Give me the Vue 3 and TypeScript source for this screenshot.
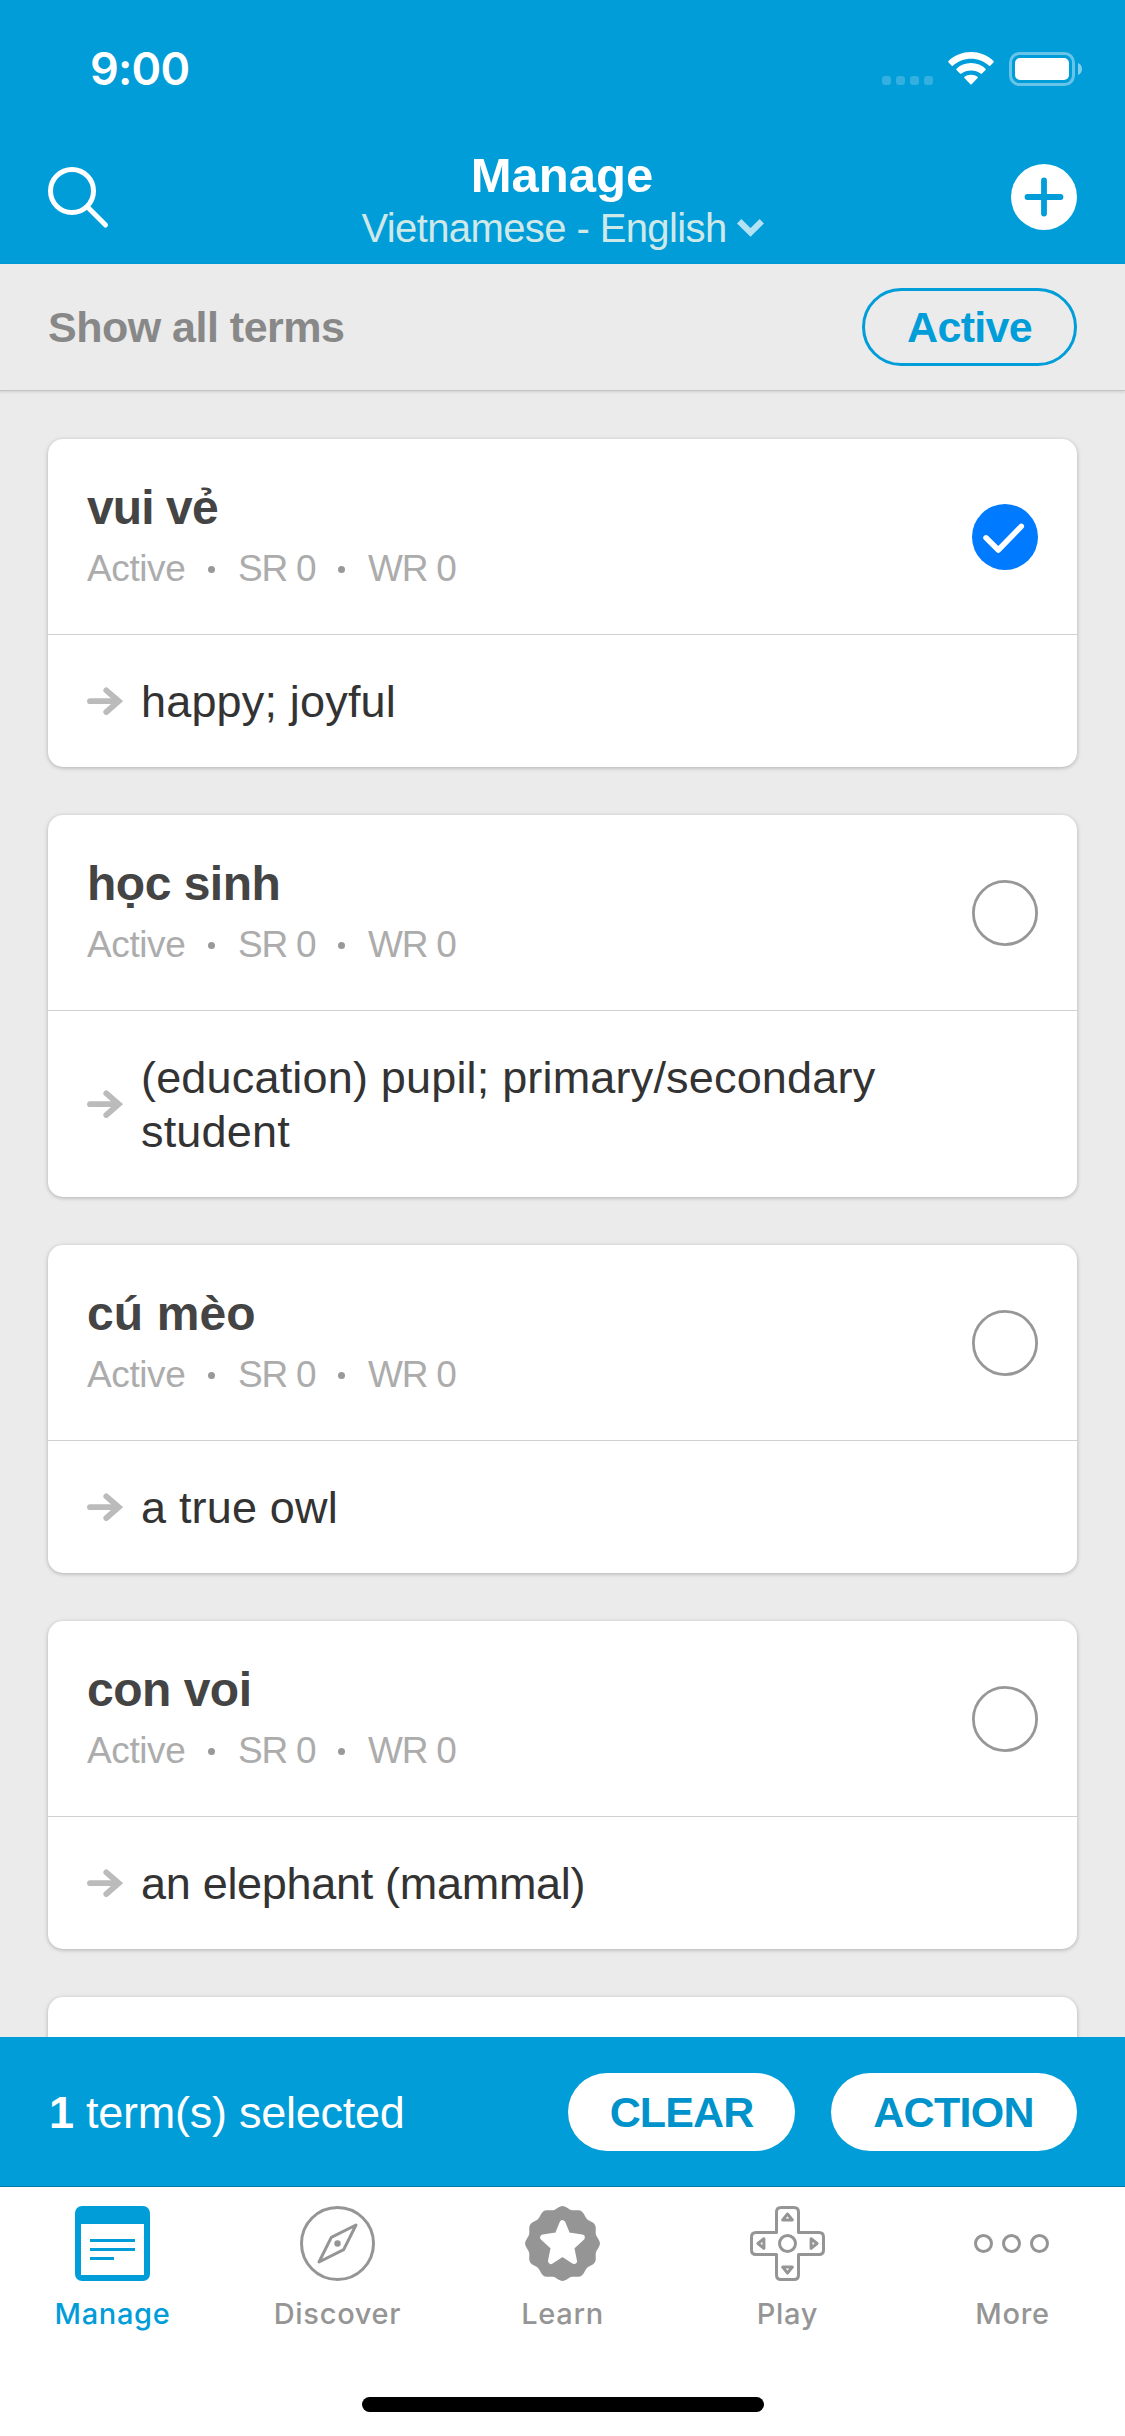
<script setup lang="ts">
interface Term {
  word: string
  meaning: string
  selected: boolean
  wordTracking?: number
  meaningTracking?: number
}

const terms: Term[] = [
  { word: 'vui vẻ', meaning: 'happy; joyful', selected: true, wordTracking: -0.9 },
  { word: 'học sinh', meaning: '(education) pupil; primary/secondary student', selected: false },
  { word: 'cú mèo', meaning: 'a true owl', selected: false, wordTracking: 0.1 },
  { word: 'con voi', meaning: 'an elephant (mammal)', selected: false, meaningTracking: -0.3 },
  { word: '', meaning: '', selected: false },
]

// Twelve-lobed badge outline, sampled around the circle
const badge: string =
  'M' +
  Array.from({ length: 180 }, (_, i) => {
    const a = (i / 180) * Math.PI * 2
    const r = 36 + 1.4 * Math.cos(12 * a)
    return `${(37.5 + r * Math.sin(a)).toFixed(2)} ${(37.5 - r * Math.cos(a)).toFixed(2)}`
  }).join('L') +
  'Z'
</script>

<template>
  <div class="screen">
    <header class="header">
      <div class="status">
        <span class="time">9:00</span>
        <div class="status-icons">
          <svg width="51" height="9" viewBox="0 0 51 9" class="cell">
            <rect v-for="i in 4" :key="i" :x="(i - 1) * 14" y="0" width="9" height="9" rx="3" fill="#fff" fill-opacity=".2" />
          </svg>
          <svg width="46" height="33" viewBox="0 0 46 33" class="wifi">
            <path d="M23 0C32 0 40 3.4 45.5 9.1Q46 9.8 45.5 10.4L42.2 13.7Q41.5 14.2 40.8 13.6C36 9.2 29.900 6.700 23 6.700S10 9.200 5.200 13.600Q4.500 14.200 3.800 13.700L.5 10.400Q0 9.800 .5 9.100C6 3.400 14 0 23 0Z" fill="#fff" />
            <path d="M23 11C28.800 11 33.900 13.100 37.500 16.800Q38 17.400 37.500 18L34 21.500Q33.300 22.100 32.600 21.500C30 19.500 26.700 18.500 23 18.500S16 19.500 13.400 21.500Q12.700 22.100 12 21.500L8.500 18Q8 17.400 8.500 16.800C12.100 13.100 17.200 11 23 11Z" fill="#fff" />
            <path d="M23 22.800C25.600 22.800 28 23.500 29.500 24.800Q30.100 25.400 29.600 26L23.600 32.300Q23 32.800 22.400 32.300L16.400 26Q15.900 25.400 16.500 24.800C18 23.500 20.400 22.800 23 22.800Z" fill="#fff" />
          </svg>
          <svg width="73" height="34" viewBox="0 0 73 34" class="battery">
            <rect x="1.500" y="1.500" width="63" height="31" rx="9" fill="none" stroke="#fff" stroke-opacity=".4" stroke-width="3" />
            <rect x="6" y="6" width="54" height="22" rx="5" fill="#fff" />
            <path d="M69 11C71.500 12 73 14.300 73 17S71.500 22 69 23Z" fill="#fff" fill-opacity=".5" />
          </svg>
        </div>
      </div>
      <div class="nav">
        <svg class="nav-search" width="66" height="66" viewBox="0 0 66 66" fill="none" stroke="#fff" stroke-width="5" stroke-linecap="round">
          <circle cx="24" cy="27" r="21.500" />
          <path d="M39.500 43L57.500 61" />
        </svg>
        <div class="nav-title">
          <h1>Manage</h1>
          <div class="pair">
            <span>Vietnamese - English</span>
            <svg width="27" height="18" viewBox="0 0 27 18" fill="none">
              <path d="M2.200 2.200L13.500 13.400L24.800 2.200" stroke="#fff" stroke-opacity=".7" stroke-width="6.200" />
            </svg>
          </div>
        </div>
        <svg width="66" height="66" viewBox="0 0 66 66">
          <circle cx="33" cy="33" r="33" fill="#fff" />
          <path d="M33 16.500V49.500M16.500 33H49.500" stroke="#009dd9" stroke-width="5.800" stroke-linecap="round" />
        </svg>
      </div>
    </header>

    <div class="filter">
      <span class="filter-label">Show all terms</span>
      <button class="filter-pill">Active</button>
    </div>

    <main class="list">
      <article v-for="(term, i) in terms" :key="i" class="card">
        <template v-if="term.word">
          <div class="card-head">
            <div>
              <h2 :style="{ letterSpacing: `${term.wordTracking ?? -0.5}px` }">{{ term.word }}</h2>
              <div class="meta">
                <span class="m-active">Active</span><i class="dot"></i><span class="m-sr">SR 0</span><i class="dot"></i><span class="m-wr">WR 0</span>
              </div>
            </div>
            <svg class="check" width="66" height="66" viewBox="0 0 66 66" fill="none">
              <template v-if="term.selected">
                <circle cx="33" cy="33" r="33" fill="#007aff" />
                <path d="M14 33.800L26.300 46L49.300 22.300" stroke="#fff" stroke-width="5.500" stroke-linecap="round" stroke-linejoin="round" />
              </template>
              <circle v-else cx="33" cy="33" r="31.600" stroke="#979797" stroke-width="2.800" />
            </svg>
          </div>
          <div class="card-body">
            <svg width="36" height="28" viewBox="0 0 36 28" fill="none" stroke="#bbb" stroke-width="5.800" stroke-linecap="round">
              <path d="M3 14.200H30" />
              <path d="M19.300 3.400L31.700 14.200L19.300 25" stroke-linejoin="miter" />
            </svg>
            <p :style="{ letterSpacing: `${term.meaningTracking ?? 0.18}px` }">{{ term.meaning }}</p>
          </div>
        </template>
      </article>
    </main>

    <div class="selection">
      <span class="count"><b>1</b> term(s) selected</span>
      <button class="pill clear">CLEAR</button>
      <button class="pill action">ACTION</button>
    </div>

    <nav class="tabs">
      <a class="tab current">
        <svg width="75" height="75" viewBox="0 0 75 75">
          <rect width="75" height="75" rx="7" fill="#009dd9" />
          <path d="M6 18H69V69H6Z" fill="#fff" />
          <path d="M15 34.500H60M15 43.500H60M15 52.500H39" stroke="#009dd9" stroke-width="3" />
        </svg>
        <span>Manage</span>
      </a>
      <a class="tab">
        <svg width="75" height="75" viewBox="0 0 75 75" fill="none" stroke="#959595" stroke-width="3">
          <circle cx="37.500" cy="37.500" r="36" />
          <path d="M56 19L31.300 31.300L19 56L43.700 43.700Z" stroke-linejoin="round" />
          <circle cx="37.500" cy="37.500" r="3.200" fill="#959595" stroke="none" />
        </svg>
        <span>Discover</span>
      </a>
      <a class="tab">
        <svg width="75" height="75" viewBox="0 0 75 75">
          <path :d="badge" fill="#959595" />
          <path d="M37.500 17.200L42.500 29.300L56.800 31.500L46.200 41.200L49 55L37.500 47.600L26 55L28.800 41.200L18.200 31.500L32.500 29.300Z" fill="#fff" stroke="#fff" stroke-width="6" stroke-linejoin="round" />
        </svg>
        <span>Learn</span>
      </a>
      <a class="tab">
        <svg width="75" height="75" viewBox="0 0 75 75" fill="none" stroke="#959595" stroke-width="3" stroke-linejoin="round">
          <path d="M31 1.500H44Q48.500 1.500 48.500 6V26.500H69Q73.500 26.500 73.500 31V44Q73.500 48.500 69 48.500H48.500V69Q48.500 73.500 44 73.500H31Q26.500 73.500 26.500 69V48.500H6Q1.500 48.500 1.500 44V31Q1.500 26.500 6 26.500H26.500V6Q26.500 1.500 31 1.500Z" />
          <circle cx="37.500" cy="37.500" r="8" />
          <path d="M37.500 8L42.300 13.900H32.700ZM37.500 67L42.300 61.100H32.700ZM8 37.500L13.900 42.300V32.700ZM67 37.500L61.100 42.300V32.700Z" />
        </svg>
        <span>Play</span>
      </a>
      <a class="tab">
        <svg class="more" width="75" height="75" viewBox="0 0 75 75" fill="none" stroke="#959595" stroke-width="3">
          <circle cx="8.500" cy="37.500" r="8" />
          <circle cx="36.500" cy="37.500" r="8" />
          <circle cx="64.500" cy="37.500" r="8" />
        </svg>
        <span>More</span>
      </a>
    </nav>
    <div class="home"><i></i></div>
  </div>
</template>

<style>
body {
  margin: 0;
  background: #fff;
}
</style>

<style scoped>
.screen {
  width: 1125px;
  height: 2436px;
  display: flex;
  flex-direction: column;
  overflow: hidden;
  background: #fff;
  font-family: "Liberation Sans", Arial, sans-serif;
}
svg {
  display: block;
  flex: none;
}
h1,
h2,
p {
  margin: 0;
}
button {
  font: inherit;
  border: 0;
  padding: 0;
  box-sizing: border-box;
}

.header {
  flex: none;
  height: 264px;
  background: #009dd9;
  color: #fff;
}
.status {
  height: 132px;
  box-sizing: border-box;
  display: flex;
  justify-content: space-between;
  padding: 41px 43px 0 90px;
}
.time {
  font: 600 45px/56px Inter, sans-serif;
  letter-spacing: -0.8px;
}
.status-icons {
  display: flex;
  align-items: flex-start;
  padding-top: 11px;
}
.cell {
  margin-top: 24px;
}
.wifi {
  margin-left: 15px;
}
.battery {
  margin-left: 15px;
}
.nav {
  height: 132px;
  box-sizing: border-box;
  display: flex;
  justify-content: space-between;
  align-items: flex-start;
  padding: 0 48px;
}
.nav > svg {
  margin-top: 32px;
}
.nav-title {
  padding-top: 13px;
  display: flex;
  flex-direction: column;
  align-items: center;
}
h1 {
  font-size: 49px;
  line-height: 60px;
  font-weight: 700;
  margin-right: 1px;
}
.pair {
  display: flex;
  align-items: center;
  gap: 10px;
  font-size: 40px;
  line-height: 46px;
  letter-spacing: -0.6px;
  color: #cfe8e8;
}

.filter {
  flex: none;
  height: 127px;
  box-sizing: border-box;
  display: flex;
  align-items: center;
  justify-content: space-between;
  padding: 0 48px;
  background: #ebebeb;
  border-bottom: 1px solid #c4c4c4;
  box-shadow: 0 1px 3px rgba(0, 0, 0, 0.12);
  position: relative;
}
.filter-label {
  font-size: 43px;
  font-weight: 700;
  letter-spacing: -0.5px;
  color: #888;
}
.filter-pill {
  width: 215px;
  height: 78px;
  border: 3px solid #009dd9;
  border-radius: 39px;
  background: none;
  color: #009dd9;
  font-size: 43px;
  font-weight: 700;
  letter-spacing: -0.7px;
}

.list {
  flex: 1;
  min-height: 0;
  overflow: hidden;
  box-sizing: border-box;
  padding: 48px;
  background: #ebebeb;
  display: flex;
  flex-direction: column;
  gap: 48px;
}
.card {
  flex: none;
  min-height: 328px;
  border-radius: 15px;
  background: #fff;
  box-shadow: 0 1px 4px rgba(0, 0, 0, 0.26);
}
.card-head {
  height: 196px;
  box-sizing: border-box;
  display: flex;
  align-items: flex-start;
  justify-content: space-between;
  padding: 39px 39px 0;
  border-bottom: 1px solid #d0d0d0;
}
.check {
  margin-top: 26px;
}
h2 {
  font-size: 48px;
  line-height: 60px;
  font-weight: 700;
  color: #444;
}
.meta {
  display: flex;
  align-items: center;
  font-size: 37px;
  line-height: 44px;
  margin-top: 9px;
  letter-spacing: -1.2px;
  white-space: nowrap;
  color: #acacac;
}
.m-active {
  width: 98px;
  letter-spacing: -0.4px;
}
.m-sr {
  width: 77px;
}
.dot {
  flex: none;
  width: 7px;
  height: 7px;
  margin: 0 23px;
  border-radius: 50%;
  background: #999;
}
.card-body {
  display: flex;
  align-items: center;
  gap: 18px;
  padding: 39px;
}
.card-body p {
  width: 860px;
  margin: 1px 0 -1px;
  font-size: 45px;
  line-height: 54px;
  color: #333;
}

.selection {
  flex: none;
  height: 150px;
  box-sizing: border-box;
  display: flex;
  align-items: center;
  padding: 1px 48px 0;
  background: #009dd9;
  border-bottom: 1px solid #0079a8;
  position: relative;
}
.count {
  flex: 1;
  padding: 2px 0 0 1px;
  font-size: 45px;
  letter-spacing: -0.25px;
  color: #fff;
}
.pill {
  height: 78px;
  border-radius: 39px;
  background: #fff;
  color: #0092ca;
  font-size: 43px;
  font-weight: 700;
  letter-spacing: -0.9px;
}
.clear {
  width: 227px;
  margin-right: 36px;
}
.action {
  width: 246px;
  padding-right: 1px;
  letter-spacing: -0.7px;
}

.tabs {
  flex: none;
  display: flex;
  height: 210px;
}
.tab {
  flex: 1;
  display: flex;
  flex-direction: column;
  align-items: center;
  padding-top: 19px;
  gap: 15px;
  color: #959595;
  font: 500 29px/36px Inter, sans-serif;
  letter-spacing: 0.7px;
}
.current {
  color: #009dd9;
}
.more {
  overflow: visible;
}
.home {
  flex: none;
  display: flex;
  justify-content: center;
  padding-bottom: 24px;
}
.home i {
  width: 402px;
  height: 15px;
  border-radius: 8px;
  background: #000;
}
</style>
